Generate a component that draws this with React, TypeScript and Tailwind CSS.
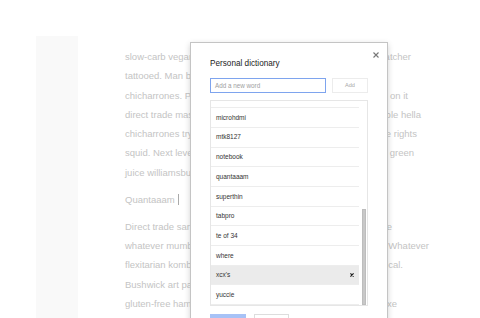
import React from "react";

const firstPara = [
  { left: "slow-carb vegan c", right: "catcher", pad: "pr-[21px]" },
  { left: "tattooed. Man braid", right: "", pad: "" },
  { left: "chicharrones. Put", right: "on it", pad: "pr-[24px]" },
  { left: "direct trade mast", right: "mble hella", pad: "pr-[11px]" },
  { left: "chicharrones try", right: "le rights", pad: "pr-[15px]" },
  { left: "squid. Next level", right: "green", pad: "pr-[18px]" },
  { left: "juice williamsburg", right: "", pad: "" },
];

const lastPara = [
  { left: "Direct trade sarto", right: "te", pad: "pr-[40px]" },
  { left: "whatever mumble", right: "Whatever", pad: "pr-[3px]" },
  { left: "flexitarian kombu", right: "ical.", pad: "pr-[29px]" },
  { left: "Bushwick art party", right: "", pad: "" },
  { left: "gluten-free hamm", right: "axe", pad: "pr-[35px]" },
];

const words = ["microhdmi", "mtk8127", "notebook", "quantaaam", "superthin", "tabpro", "te of 34", "where", "xcx's", "yuccie"];

function Line({ left, right, pad }: { left: string; right: string; pad: string }) {
  return (
    <div className={`flex justify-between h-[19.3px] items-center whitespace-nowrap ${pad}`}>
      <span>{left}</span>
      <span>{right}</span>
    </div>
  );
}

export default function App() {
  return (
    <div className="relative w-[480px] h-[318px] overflow-hidden bg-white" style={{ fontFamily: "'Liberation Sans', Arial, sans-serif" }}>
      <div className="flex h-full pl-[36px]">
        <div className="w-[42px] mt-[36px] bg-[#f9f9f9]" />
        <div className="ml-[47px] w-[307px] pt-[47.4px] text-[9.5px] text-[#c4c4c4]">
          <div className="mb-[7.7px]">
            {firstPara.map((l, i) => (
              <Line key={i} {...l} />
            ))}
          </div>
          <div className="mb-[7.7px] h-[19.3px] flex items-center">
            Quantaaam
            <span className="ml-[3px] w-px h-[11px] bg-[#aaaaaa]" />
          </div>
          <div>
            {lastPara.map((l, i) => (
              <Line key={i} {...l} />
            ))}
          </div>
        </div>
      </div>

      {/* dialog */}
      <div className="absolute left-[190px] top-[42px] w-[198px] h-[300px] bg-white border border-[#c4c4c4] shadow-[0_2px_6px_rgba(0,0,0,0.18)] px-[19px]">
        <button className="absolute right-[8px] top-[9px] w-[6px] h-[6px] flex items-center justify-center">
          <svg width="6" height="6" viewBox="0 0 6 6">
            <path d="M0.5 0.5L5.5 5.5M5.5 0.5L0.5 5.5" stroke="#777" strokeWidth="1.1" />
          </svg>
        </button>
        <div className="pt-[15px] text-[8.2px] text-[#222] leading-[11px]">Personal dictionary</div>
        <div className="flex gap-[6px] mt-[9px]">
          <div className="w-[116px] h-[15px] border border-[#7ea4ee] flex items-center px-[4px] text-[6.3px] text-[#a0a0a0]">
            Add a new word
          </div>
          <div className="w-[36px] h-[15px] border border-[#ececec] flex items-center justify-center text-[5.6px] text-[#a8a8a8]">
            Add
          </div>
        </div>
        <div className="mt-[7px] w-[158px] h-[206px] border border-[#e6e6e6] flex overflow-hidden">
          <div className="w-[148px]">
            <div className="h-[7.3px] border-b border-[#ededed]" />
            {words.map((w) => (
              <div
                key={w}
                className={`h-[19.7px] border-b border-[#ededed] flex items-center justify-between pl-[5px] pr-[5px] text-[6.5px] text-[#333] ${w === "xcx's" ? "bg-[#ebebeb]" : ""}`}
              >
                <span>{w}</span>
                {w === "xcx's" && (
                  <svg width="4" height="4" viewBox="0 0 4 4">
                    <path d="M0.4 0.4L3.6 3.6M3.6 0.4L0.4 3.6" stroke="#222" strokeWidth="1.2" />
                  </svg>
                )}
              </div>
            ))}
          </div>
          <div className="flex-1 flex flex-col justify-end pl-[3px]">
            <div className="w-[4px] h-[96px] bg-[#c8c8c8] border border-[#bdbdbd]" />
          </div>
        </div>
        <div className="flex gap-[8px] mt-[8px]">
          <div className="w-[36px] h-[20px] bg-[#a7c2f6]" />
          <div className="w-[35px] h-[20px] bg-white border border-[#dddddd]" />
        </div>
      </div>
    </div>
  );
}
